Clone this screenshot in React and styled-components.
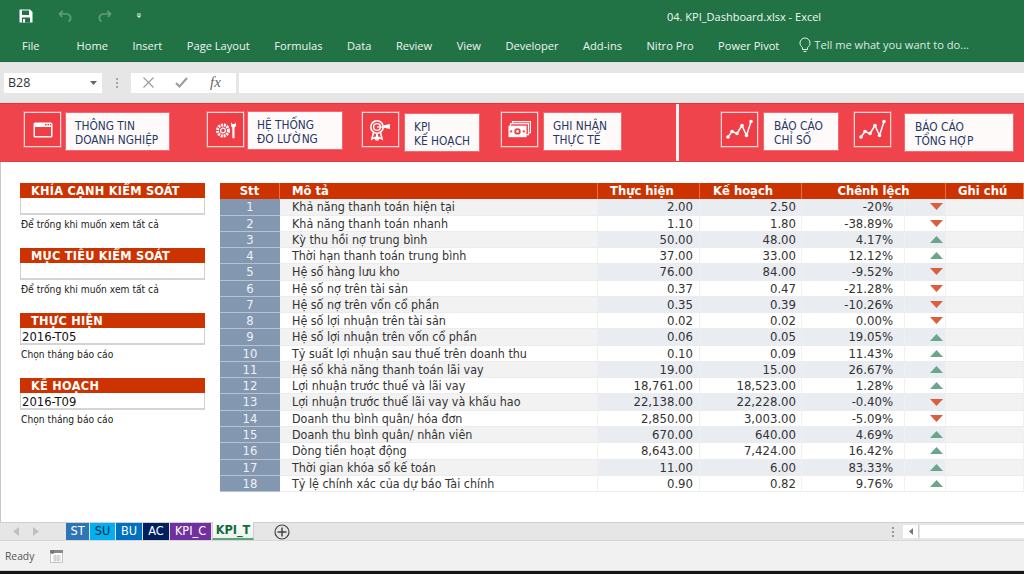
import React from 'react';
import styled, { createGlobalStyle } from 'styled-components';

const Global = createGlobalStyle`
  html, body { margin: 0; padding: 0; background: #fff; }
  #root { width: 1024px; height: 574px; overflow: hidden; }
`;

const SHEET_FONT = `"DejaVu Sans Condensed", "DejaVu Sans", sans-serif`;
const UI_FONT = `"Open Sans", "Noto Sans", sans-serif`;

const Page = styled.div`
  width: 1024px; height: 574px; display: flex; flex-direction: column; overflow: hidden;
  font-family: ${UI_FONT};
`;
const TitleBar = styled.div`
  height: 32px; background: #217346; display: flex; align-items: center; color: #fff; flex: none;
`;
const QuickIcon = styled.svg`
  flex: none; margin-left: ${p => p.$ml}px; display: block;
`;
const DocTitle = styled.div`
  margin-left: ${p => p.$ml}px; font-size: 11px; color: #f2f7f4; white-space: nowrap; padding-top: 1px;
`;
const Ribbon = styled.div`
  height: 30px; background: #217346; display: flex; align-items: flex-start; flex: none;
  padding-left: 22px; color: #eef5f1; font-size: 11.1px; line-height: 28px; border-bottom: 1px solid #1d6a3f; box-sizing: border-box;
`;
const RibbonTab = styled.div`
  margin-left: ${p => p.$ml ?? 25}px; white-space: nowrap;
`;
const Tell = styled.div`
  margin-left: 20px; display: flex; align-items: center; gap: 3px; white-space: nowrap; font-size: 11.1px; color: #dce9e2;
  line-height: 26px;
`;
const FormulaBar = styled.div`
  height: 41px; background: #e6e6e6; display: flex; align-items: center; flex: none; padding: 0 0 0 4px; box-sizing: border-box;
`;
const NameBox = styled.div`
  width: 98px; height: 20px; background: #fff; display: flex; align-items: center; justify-content: space-between;
  padding: 0 5px 0 4px; box-sizing: border-box; font-size: 12.5px; color: #333;
`;
const Grip = styled.div`
  width: 29px; display: flex; flex-direction: column; align-items: center; gap: 2px;
  i { width: 2px; height: 2px; background: #a6a6a6; display: block; }
`;
const FxBox = styled.div`
  width: 105px; height: 20px; background: #fff; display: flex; align-items: center; box-sizing: border-box;
  padding-left: 12px; gap: 21px; color: #7b7b7b;
`;
const Fx = styled.span`
  font-family: "Liberation Serif", serif; font-style: italic; font-size: 15px; color: #666; margin-left: 1px;
`;
const FormulaInput = styled.div`
  flex: 1; height: 20px; background: #fff; margin-left: 3px;
`;
const Banner = styled.div`
  height: 59px; background: #f0444c; display: flex; flex: none; box-sizing: border-box;
  border-top: 1px solid #ee2f38; border-bottom: 1px solid #ee3a42;
`;
const BannerGroup = styled.div`
  display: flex; align-items: flex-start; width: ${p => p.$w}px; flex: none; padding-top: 8px; box-sizing: border-box;
`;
const Divider = styled.div`
  width: 3px; background: #fdf6f6; flex: none;
`;
const IconBox = styled.div`
  width: 37px; height: 35px; box-sizing: border-box; border: 1px solid #fbd9da; outline: 1px solid #f2666c;
  display: flex; align-items: center; justify-content: center; margin-left: ${p => p.$ml}px; flex: none; background: #ef3e46;
`;
const Label = styled.div`
  width: ${p => p.$w}px; height: 37px; margin-left: ${p => p.$gap}px; margin-top: ${p => p.$top}px; background: #fffafa; flex: none;
  box-sizing: border-box; padding: 6px 0 0 ${p => p.$pl}px; color: #1f3864; font-family: ${SHEET_FONT};
  font-size: 11.8px; line-height: 14px; white-space: nowrap; box-shadow: 0 0 0 1px #f5686e;
`;
const Sheet = styled.div`
  height: 360px; flex: none; display: flex; align-items: flex-start; box-sizing: border-box; background: #fff;
  padding: 21px 0 0 19px; border-left: 1px solid #c8c8c8; font-family: ${SHEET_FONT}; 
`;
const Filters = styled.div`
  width: 185px; flex: none; display: flex; flex-direction: column; gap: 18px;
`;
const FilterGroup = styled.div`
  height: 47px;
`;
const FilterHead = styled.div`
  height: 15px; background: #cc3300; color: #fff; font-weight: 700; font-size: 12.6px; line-height: 15px; padding-left: 11px; white-space: nowrap;
  letter-spacing: 0.25px;
`;
const FilterInput = styled.div`
  height: 17px; box-sizing: border-box; background: #fff; border: 1px solid #d0d0d0; border-top: none; border-bottom: 2px solid #d4d4d4;
  font-size: 12.9px; line-height: 17px; color: #111; padding-left: 1px;
`;
const Hint = styled.div`
  font-size: 10.2px; line-height: 18px; color: #222; padding: 1px 0 0 1px; white-space: nowrap;
`;
const Table = styled.div`
  margin-left: 15px; width: 804px; flex: none; display: grid;
  grid-template-columns: 60px 318px 102px 102px 103px 41px 78px;
  grid-auto-rows: 16.28px;
  font-size: 12.4px; color: #333;
`;
const Th = styled.div`
  background: #cc3300; color: #fff; font-weight: 700; font-size: 12.9px; line-height: 15px; height: 15.5px;
  border-right: 1px solid #e2704d; box-sizing: border-box; white-space: nowrap;
  text-align: ${p => p.$center ? 'center' : 'left'}; padding-left: ${p => p.$pl ?? 0}px;
  grid-column: span ${p => p.$span ?? 1};
  &:last-child { border-right: none; }
`;
const Stt = styled.div`
  background: #8497b0; color: #eef1f5; text-align: center; line-height: 15.5px; border-bottom: 1px solid #b8c3d2; box-sizing: border-box; font-size: 12.9px;
`;
const Cell = styled.div`
  box-sizing: border-box; line-height: 15.5px; white-space: nowrap; 
  background: ${p => p.$bg}; border-bottom: 1px solid #ececec; border-right: 1px solid ${p => p.$line ?? '#f0f0f0'};
  text-align: ${p => p.$right ? 'right' : 'left'};
  font-size: ${p => p.$right ? '13px' : 'inherit'};
  padding-left: ${p => p.$pl ?? 0}px; padding-right: ${p => p.$pr ?? 0}px;
  display: ${p => p.$flag ? 'flex' : 'block'}; align-items: center; justify-content: flex-end;
`;
const TabBar = styled.div`
  height: 19px; flex: none; background: #e6e6e6; display: flex; align-items: stretch; box-sizing: border-box; border-top: 1px solid #cfcfcf;
  border-bottom: 1px solid #d8d8d8; position: relative;
`;
const NavArrows = styled.div`
  width: 66px; flex: none; display: flex; align-items: center; padding-left: 13px; gap: 14px; box-sizing: border-box;
`;
const SheetTab = styled.div`
  width: ${p => p.$w}px; flex: none; margin-right: 1px; background: ${p => p.$bg}; color: ${p => p.$fg ?? '#fff'}; font-size: 12.6px; line-height: 15px; text-align: center;
  font-family: ${SHEET_FONT}; box-sizing: border-box;
`;
const ActiveTab = styled.div`
  width: 42px; flex: none; margin-top: -1px; background: linear-gradient(#ffffff, #eaf3ea); color: #146c3d; font-weight: 700; font-size: 12.6px; line-height: 16px; text-align: center;
  font-family: ${SHEET_FONT}; box-sizing: border-box; border: 1px solid #cfcfcf; border-top: none; border-bottom: 2px solid #5fa37b; 
`;
const AddTab = styled.svg`
  margin: 1px 0 0 20px; flex: none;
`;
const ScrollArea = styled.div`
  margin-left: auto; display: flex; align-items: stretch;
`;
const ScrollGrip = styled.div`
  width: 11px; margin-right: 5px; display: flex; flex-direction: column; align-items: center; justify-content: center; gap: 2px;
  i { display: block; width: 2px; height: 2px; background: #999; }
`;
const ScrollBtn = styled.div`
  width: 16px; background: #fff; display: flex; align-items: center; justify-content: center; margin: 2px 0; box-sizing: border-box; border-right: 1px solid #d0d0d0;
`;
const ScrollTrack = styled.div`
  width: 104px; background: #fff; margin: 2px 0 2px 1px;
`;
const StatusBar = styled.div`
  height: 30px; flex: none; background: #f1f1f1; display: flex; align-items: center; padding-left: 5px; gap: 16px;
  font-size: 10.3px; color: #555; box-sizing: border-box; padding-top: 1px; border-bottom: 1px solid #d5d5d5;
`;
const Bottom = styled.div`
  flex: 1; background: #161616;
`;

const rows = [
  ['Khả năng thanh toán hiện tại', '2.00', '2.50', '-20%', 'd'],
  ['Khả năng thanh toán nhanh', '1.10', '1.80', '-38.89%', 'd'],
  ['Kỳ thu hồi nợ trung bình', '50.00', '48.00', '4.17%', 'u'],
  ['Thời hạn thanh toán trung bình', '37.00', '33.00', '12.12%', 'u'],
  ['Hệ số hàng lưu kho', '76.00', '84.00', '-9.52%', 'd'],
  ['Hệ số nợ trên tài sản', '0.37', '0.47', '-21.28%', 'd'],
  ['Hệ số nợ trên vốn cổ phần', '0.35', '0.39', '-10.26%', 'd'],
  ['Hệ số lợi nhuận trên tài sản', '0.02', '0.02', '0.00%', 'd'],
  ['Hệ số lợi nhuận trên vốn cổ phần', '0.06', '0.05', '19.05%', 'u'],
  ['Tỷ suất lợi nhuận sau thuế trên doanh thu', '0.10', '0.09', '11.43%', 'u'],
  ['Hệ số khả năng thanh toán lãi vay', '19.00', '15.00', '26.67%', 'u'],
  ['Lợi nhuận trước thuế và lãi vay', '18,761.00', '18,523.00', '1.28%', 'u'],
  ['Lợi nhuận trước thuế lãi vay và khấu hao', '22,138.00', '22,228.00', '-0.40%', 'd'],
  ['Doanh thu bình quân/ hóa đơn', '2,850.00', '3,003.00', '-5.09%', 'd'],
  ['Doanh thu bình quân/ nhân viên', '670.00', '640.00', '4.69%', 'u'],
  ['Dòng tiền hoạt động', '8,643.00', '7,424.00', '16.42%', 'u'],
  ['Thời gian khóa sổ kế toán', '11.00', '6.00', '83.33%', 'u'],
  ['Tỷ lệ chính xác của dự báo Tài chính', '0.90', '0.82', '9.76%', 'u'],
];

const filters = [
  ['KHÍA CẠNH KIỂM SOÁT', '', 'Để trống khi muốn xem tất cả'],
  ['MỤC TIÊU KIỂM SOÁT', '', 'Để trống khi muốn xem tất cả'],
  ['THỰC HIỆN', '2016-T05', 'Chọn tháng báo cáo'],
  ['KẾ HOẠCH', '2016-T09', 'Chọn tháng báo cáo'],
];

const Flag = ({ dir }) => (
  <svg width="13" height="7" viewBox="0 0 13 7" style={{ marginRight: 2 }}>
    <polygon points={dir === 'u' ? '6.5,0 13,7 0,7' : '0,0 13,0 6.5,7'} fill={dir === 'u' ? '#6ba58c' : '#d9603f'} />
  </svg>
);

const WindowIcon = () => (
  <svg width="20" height="16" viewBox="0 0 20 16" fill="none">
    <rect x="0.5" y="0.5" width="19" height="15" rx="1.5" fill="#fff" />
    <rect x="2" y="5" width="16" height="9" fill="#ef3e46" />
    <rect x="12" y="2" width="1.6" height="1.4" fill="#ef3e46" />
    <rect x="14.5" y="2" width="1.6" height="1.4" fill="#ef3e46" />
    <rect x="17" y="2" width="1.2" height="1.4" fill="#ef3e46" />
  </svg>
);
const ToolsIcon = () => (
  <svg width="22" height="20" viewBox="0 0 22 20" fill="none">
    <circle cx="8" cy="10.5" r="5.5" stroke="#fff" strokeWidth="3" strokeDasharray="2 0.9" />
    <circle cx="8" cy="10.5" r="2.4" stroke="#fff" strokeWidth="1.2" />
    <path d="M16 2.2v3.6c0 .8.6 1.4 1.3 1.4v11h2.2V7.200c.8 0 1.400-.6 1.400-1.400V2.200l-1.500 1.800h-2z" fill="#fff" />
  </svg>
);
const TargetIcon = () => (
  <svg width="24" height="22" viewBox="0 0 24 22" fill="none">
    <circle cx="8" cy="8" r="6.2" stroke="#fff" strokeWidth="1.6" />
    <circle cx="8" cy="8" r="3.4" stroke="#fff" strokeWidth="1.4" />
    <path d="M8 8h8" stroke="#fff" strokeWidth="1.200" />
    <path d="M15 6.200l6-1.200v5l-6-1.200z" fill="#fff" />
    <path d="M4.500 13.500L2.800 20l3-1.500L7 20.500l1-5.500 1 5.500 1.200-2 3 1.500-1.700-6.500" stroke="#fff" strokeWidth="1.500" />
  </svg>
);
const MoneyIcon = () => (
  <svg width="23" height="17" viewBox="0 0 23 17" fill="none">
    <rect x="4.500" y="0.700" width="18" height="11" stroke="#fff" strokeWidth="1.200" />
    <rect x="2.500" y="2.700" width="18" height="11" stroke="#fff" strokeWidth="1.200" fill="#ef3e46" />
    <rect x="0.500" y="4.700" width="18" height="11.500" fill="#fff" />
    <circle cx="9.500" cy="10.400" r="3.200" fill="#ef3e46" />
    <circle cx="9.500" cy="10.400" r="1.300" fill="#fff" />
    <rect x="2.200" y="9.400" width="2" height="2" fill="#ef3e46" />
    <rect x="14.800" y="9.400" width="2" height="2" fill="#ef3e46" />
  </svg>
);
const ChartIcon = () => (
  <svg width="27" height="21" viewBox="0 0 27 21" fill="none">
    <path d="M2 18l4-5.500 5 2 5-8 4.500 10L25 2.500" stroke="#fff" strokeWidth="1.500" strokeLinejoin="round" />
    {[[2, 18], [6, 12.500], [11, 14.500], [16, 6.500], [20.500, 16.500], [25, 2.500]].map(([x, y]) => (
      <circle key={x} cx={x} cy={y} r="1.800" fill="#fff" />
    ))}
  </svg>
);

const Nav = ({ dir }) => (
  <svg width="6" height="9" viewBox="0 0 6 9">
    <polygon points={dir === 'l' ? '6,0 6,9 0,4.500' : '0,0 0,9 6,4.500'} fill="#c0c0c0" />
  </svg>
);

const tabs = ['Home', 'Insert', 'Page Layout', 'Formulas', 'Data', 'Review', 'View', 'Developer', 'Add-ins', 'Nitro Pro', 'Power Pivot'];

export default function App() {
  return (
    <Page>
      <Global />
      <TitleBar>
        <QuickIcon $ml={19} width="14" height="14" viewBox="0 0 14 14">
          <path d="M0.500 0.500h10.500l2.500 2.500v10.500H0.500z" fill="#fff" />
          <rect x="3" y="1.500" width="7" height="4.500" fill="#217346" />
          <rect x="3" y="8.500" width="8" height="5" fill="#217346" />
          <rect x="4" y="10" width="2" height="3.500" fill="#fff" />
        </QuickIcon>
        <QuickIcon $ml={25} width="15" height="14" viewBox="0 0 15 14" fill="none">
          <path d="M4 8L1.500 4.800 4.800 2M2 5h7a4 4 0 0 1 1.500 7.500" stroke="#5f9c7d" strokeWidth="1.700" />
        </QuickIcon>
        <QuickIcon $ml={24} width="15" height="14" viewBox="0 0 15 14" fill="none">
          <path d="M11 8l2.500-3.200L10.200 2M13 5H6a4 4 0 0 0-1.500 7.500" stroke="#5f9c7d" strokeWidth="1.700" />
        </QuickIcon>
        <QuickIcon $ml={24} width="6" height="6" viewBox="0 0 6 6">
          <rect x="1" y="0.500" width="4" height="1" fill="#e4efe9" />
          <polygon points="0.500,2.500 5.500,2.500 3,5" fill="#e4efe9" />
        </QuickIcon>
        <DocTitle $ml={525}>04. KPI_Dashboard.xlsx - Excel</DocTitle>
      </TitleBar>
      <Ribbon>
        <RibbonTab $ml={0}>File</RibbonTab>
        {tabs.map((t, i) => <RibbonTab key={t} $ml={i === 0 ? 37 : 24.5}>{t}</RibbonTab>)}
        <Tell>
          <svg width="12" height="16" viewBox="0 0 12 16" fill="none">
            <path d="M3.500 10.500C2 9.500 1 8 1 6a5 5 0 0 1 10 0c0 2-1 3.500-2.500 4.500v2h-5z" stroke="#e8f1ec" strokeWidth="1" />
            <path d="M4.500 14.500h3" stroke="#e8f1ec" strokeWidth="1" />
          </svg>
          Tell me what you want to do...
        </Tell>
      </Ribbon>
      <FormulaBar>
        <NameBox>
          B28
          <svg width="7" height="4" viewBox="0 0 7 4"><polygon points="0,0 7,0 3.500,4" fill="#666" /></svg>
        </NameBox>
        <Grip><i /><i /><i /></Grip>
        <FxBox>
          <svg width="11" height="11" viewBox="0 0 11 11" fill="none"><path d="M0.500 0.500l10 10M10.500 0.500l-10 10" stroke="#9c9c9c" strokeWidth="1.200" /></svg>
          <svg width="13" height="11" viewBox="0 0 13 11" fill="none"><path d="M1 6l3.500 3.500L12 1" stroke="#9c9c9c" strokeWidth="2" /></svg>
          <Fx>fx</Fx>
        </FxBox>
        <FormulaInput />
      </FormulaBar>
      <Banner>
        <BannerGroup $w={676}>
          <IconBox $ml={24}><WindowIcon /></IconBox>
          <Label $w={103} $gap={5} $top={1} $pl={9}>THÔNG TIN<br />DOANH NGHIỆP</Label>
          <IconBox $ml={38}><ToolsIcon /></IconBox>
          <Label $w={94} $gap={4} $top={0} $pl={9}>HỆ THỐNG<br />ĐO LƯỜNG</Label>
          <IconBox $ml={20}><TargetIcon /></IconBox>
          <Label $w={74} $gap={6} $top={2} $pl={9}>KPI<br />KẾ HOẠCH</Label>
          <IconBox $ml={22}><MoneyIcon /></IconBox>
          <Label $w={77} $gap={6} $top={1} $pl={9}>GHI NHẬN<br />THỰC TẾ</Label>
        </BannerGroup>
        <Divider />
        <BannerGroup $w={345}>
          <IconBox $ml={42}><ChartIcon /></IconBox>
          <Label $w={74} $gap={6} $top={1} $pl={10}>BÁO CÁO<br />CHỈ SỐ</Label>
          <IconBox $ml={16}><ChartIcon /></IconBox>
          <Label $w={108} $gap={14} $top={2} $pl={10}>BÁO CÁO<br />TỔNG HỢP</Label>
        </BannerGroup>
      </Banner>
      <Sheet>
        <Filters>
          {filters.map(([h, v, n]) => (
            <FilterGroup key={h}>
              <FilterHead>{h}</FilterHead>
              <FilterInput>{v}</FilterInput>
              <Hint>{n}</Hint>
            </FilterGroup>
          ))}
        </Filters>
        <Table>
          <Th $center>Stt</Th>
          <Th $pl={12}>Mô tả</Th>
          <Th $pl={12}>Thực hiện</Th>
          <Th $pl={13}>Kế hoạch</Th>
          <Th $span={2} $center>Chênh lệch</Th>
          <Th $pl={12}>Ghi chú</Th>
          {rows.map((r, i) => {
            const odd = i % 2 === 0;
            const bg = odd ? '#e9ecf1' : '#fff';
            const plain = odd ? '#f2f2f2' : '#fff';
            return (
              <React.Fragment key={r[0]}>
                <Stt>{i + 1}</Stt>
                <Cell $bg={plain} $pl={12}>{r[0]}</Cell>
                <Cell $bg={bg} $right $pr={6}>{r[1]}</Cell>
                <Cell $bg={bg} $right $pr={5}>{r[2]}</Cell>
                <Cell $bg={bg} $right $pr={11}>{r[3]}</Cell>
                <Cell $bg={bg} $flag><Flag dir={r[4]} /></Cell>
                <Cell $bg={plain} />
              </React.Fragment>
            );
          })}
        </Table>
      </Sheet>
      <TabBar>
        <NavArrows><Nav dir="l" /><Nav dir="r" /></NavArrows>
        <SheetTab $w={23} $bg="#2e75b6">ST</SheetTab>
        <SheetTab $w={25} $bg="#00b0f0" $fg="#0b2a3a">SU</SheetTab>
        <SheetTab $w={26} $bg="#0070c0">BU</SheetTab>
        <SheetTab $w={26} $bg="#002060">AC</SheetTab>
        <SheetTab $w={41} $bg="#7030a0">KPI_C</SheetTab>
        <ActiveTab>KPI_T</ActiveTab>
        <AddTab width="16" height="16" viewBox="0 0 16 16" fill="none">
          <circle cx="8" cy="8" r="7" stroke="#444" strokeWidth="1.200" />
          <path d="M8 3.500v9M3.500 8h9" stroke="#444" strokeWidth="1.500" />
        </AddTab>
        <ScrollArea>
          <ScrollGrip><i /><i /><i /></ScrollGrip>
          <ScrollBtn>
            <svg width="4" height="7" viewBox="0 0 4 7"><polygon points="4,0 4,7 0,3.500" fill="#777" /></svg>
          </ScrollBtn>
          <ScrollTrack />
        </ScrollArea>
      </TabBar>
      <StatusBar>
        Ready
        <svg width="13" height="13" viewBox="0 0 13 13">
          <rect x="0.500" y="0.500" width="12" height="12" fill="#fff" stroke="#c4c4c4" />
          <rect x="0" y="0" width="13" height="3" fill="#8a8a8a" />
          <circle cx="2.500" cy="2" r="2" fill="#777" />
          <path d="M3 6h8M3 8h8M3 10h8M5 5v7M8 5v7" stroke="#bbb" strokeWidth="0.800" />
        </svg>
      </StatusBar>
      <Bottom />
    </Page>
  );
}
